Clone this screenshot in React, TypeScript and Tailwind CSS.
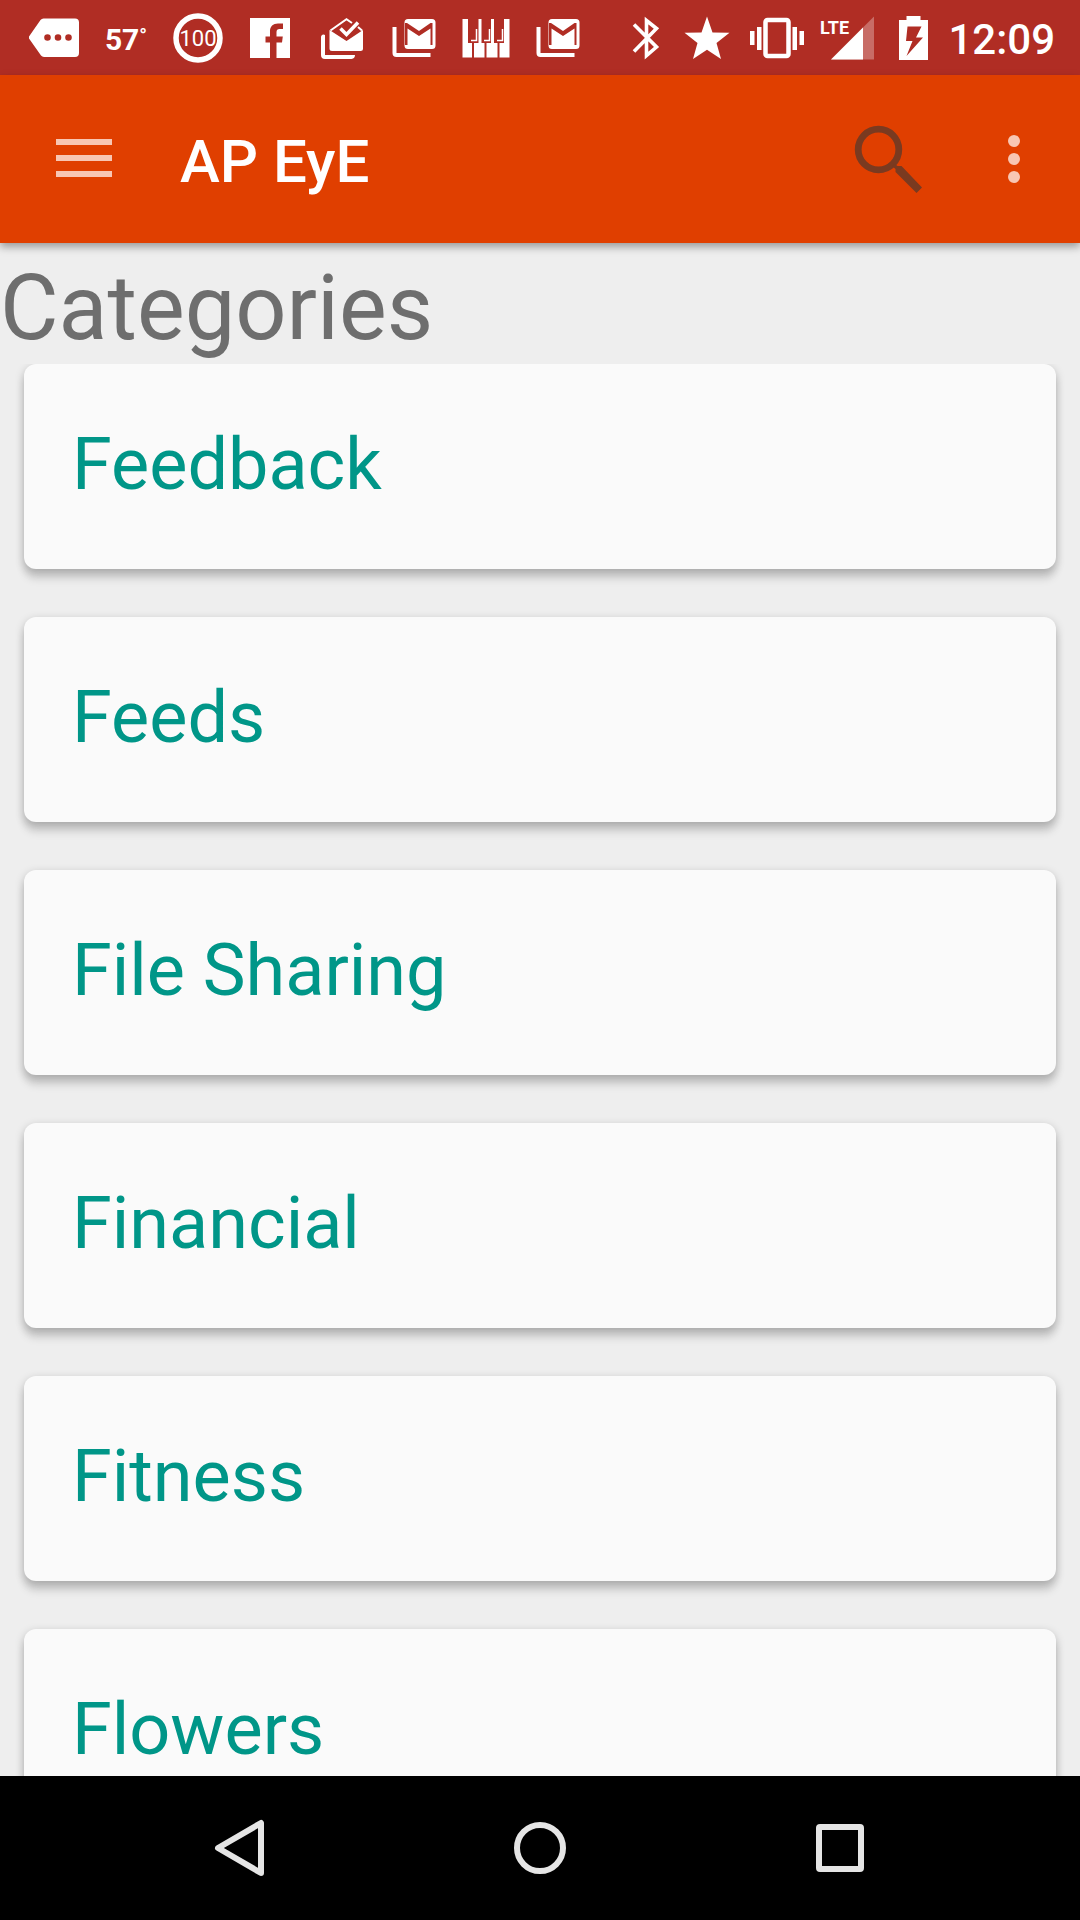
import React from 'react';

const categories = ['Feedback', 'Feeds', 'File Sharing', 'Financial', 'Fitness', 'Flowers'];

const MessageIcon = () => (
  <svg className="w-[50px] h-[44px]" viewBox="0 0 50 44" fill="currentColor">
    <path fillRule="evenodd" d="M14.5 2.5H46a4 4 0 0 1 4 4V37a4 4 0 0 1-4 4H15a4 4 0 0 1-3-1.500L0 22.500a2 2 0 0 1 0-2L11.500 4a4 4 0 0 1 3-1.500zM18.500 18.200a3.300 3.300 0 1 0 0 6.600a3.300 3.300 0 0 0 0-6.600zm10.500 0a3.300 3.300 0 1 0 0 6.600a3.300 3.300 0 0 0 0-6.600zm10.500 0a3.300 3.300 0 1 0 0 6.600a3.300 3.300 0 0 0 0-6.600z" />
  </svg>
);

const BatteryLevelIcon = () => (
  <svg className="w-[50px] h-[50px]" viewBox="0 0 50 50" fill="currentColor">
    <circle cx="25" cy="25" r="22" fill="none" stroke="currentColor" strokeWidth="5.500" />
    <text x="25" y="33" textAnchor="middle" fontSize="22" className="font-['Roboto',sans-serif]">100</text>
  </svg>
);

const FacebookIcon = () => (
  <svg className="w-[42px] h-[42px]" viewBox="0 0 42 42" fill="currentColor">
    <path d="M1 1H41V41H27.500V25.500H33L33.800 19.500H27.500V15C27.500 13 28.500 12 30.500 12H34V6.500H29C24 6.500 21 9.500 21 14V19.500H16.500V25.500H21V41H1z" />
  </svg>
);

const InboxIcon = () => (
  <svg className="w-[44px] h-[44px]" viewBox="0 0 44 44" fill="currentColor">
    <path d="M1 21a2.500 2.500 0 0 1 4-2V39H35a4 4 0 0 1-3.500 4H5a4 4 0 0 1-4-4z" />
    <path d="M9.500 14L26.500 25L43 14V32.500a2.500 2.500 0 0 1-2.500 2.500H12a2.500 2.500 0 0 1-2.500-2.500z" />
    <path d="M10.500 14.500L26.500 3.200L32 7M38 11L42 14.500" fill="none" stroke="currentColor" strokeWidth="2" />
    <path d="M20.500 12.500L26.500 18.500L38 6.500" fill="none" stroke="currentColor" strokeWidth="3.500" />
  </svg>
);

const GmailIcon = () => (
  <svg className="w-[44px] h-[40px]" viewBox="0 0 44 40" fill="currentColor">
    <path d="M.5 9H4.500V35H38.500V39H4.500a4 4 0 0 1-4-4z" />
    <path fillRule="evenodd" d="M16 1H40a3.500 3.500 0 0 1 3.500 3.500V27.500a3.500 3.500 0 0 1-3.500 3.500H16a3.500 3.500 0 0 1-3.500-3.500V4.500A3.500 3.500 0 0 1 16 1zM13 5V27H15.500V10.500L27 18L38.500 10.500V27H40.500V5H38.500L27 13L15 5z" />
  </svg>
);

const PianoIcon = () => (
  <svg className="w-[48px] h-[40px]" viewBox="0 0 48 40" fill="currentColor">
    <path d="M.5 1H6V25H10V39.500H.5zM12 25H22.500V39.500H12zM24.500 25H35.500V39.500H24.500zM37.500 25H42V1H47.500V39.500H37.500z" />
    <path d="M16.500 1H19.500V25H16.500zM29 1H32V25H29z" />
    <path d="M14.500 11V22.500H9M27.500 11V22.500H22M40.500 11V22.500H35" fill="none" stroke="currentColor" strokeWidth="1.500" />
  </svg>
);

const BluetoothIcon = () => (
  <svg className="w-[36px] h-[44px]" viewBox="0 0 36 44" fill="none" stroke="currentColor" strokeWidth="3.600">
    <path d="M2 8.500L24.500 31L14.500 39.500V4.500L24.500 12.500L2 35.500" />
  </svg>
);

const StarIcon = () => (
  <svg className="w-[50px] h-[44px]" viewBox="0 0 50 44" fill="currentColor">
    <path d="M23 .5L28.500 16.500L45.500 16.800L32.500 27L37 43L23 33.800L9 43L13.500 27L.5 16.800L17.500 16.500z" />
  </svg>
);

const VibrateIcon = () => (
  <svg className="w-[54px] h-[42px]" viewBox="0 0 54 42" fill="currentColor">
    <path d="M0 14H4.500V28H0zM7 10H11.500V33H7zM42.500 10H47V33H42.500zM49.500 14H54V28H49.500z" />
    <rect x="15.500" y="3" width="23" height="36" rx="2" fill="none" stroke="currentColor" strokeWidth="4.500" />
  </svg>
);

const SignalIcon = () => (
  <svg className="w-[62px] h-[44px]" viewBox="0 0 62 44" fill="currentColor">
    <path d="M11 43.500L54 .5V43.500z" opacity=".3" />
    <path d="M11 43.500L43 11.500V43.500z" />
    <text x="0" y="18" fontSize="18" className="font-['Roboto',sans-serif] font-bold">LTE</text>
  </svg>
);

const ChargingIcon = () => (
  <svg className="w-[34px] h-[44px]" viewBox="0 0 34 44" fill="currentColor">
    <path fillRule="evenodd" d="M8.500 0H22.500V4H30V44H1V4H8.500zM9.500 10.500L8 25H14.500L8.500 40L25 21.500H18L23.500 10.500z" />
  </svg>
);

const notificationIcons: React.FC[] = [FacebookIcon, InboxIcon, GmailIcon, PianoIcon, GmailIcon];

const StatusBar = () => (
  <div className="flex items-center justify-between h-[75px] shrink-0 pl-[18px] pr-[25px] bg-[#b02d24] text-white">
    <div className="flex items-center">
      <div className="w-[72px] flex justify-center"><MessageIcon /></div>
      <div className="w-[72px] flex justify-center pt-1 text-[30px] leading-9 font-bold">57<span className="text-xl leading-7">°</span></div>
      <div className="w-[72px] flex justify-center"><BatteryLevelIcon /></div>
      {notificationIcons.map((Icon, i) => (
        <div key={i} className="w-[72px] flex justify-center"><Icon /></div>
      ))}
    </div>
    <div className="flex items-center gap-4">
      <BluetoothIcon />
      <StarIcon />
      <VibrateIcon />
      <SignalIcon />
      <ChargingIcon />
      <span className="pt-1 text-[42px] leading-[49px] font-medium">12:09</span>
    </div>
  </div>
);

const AppBar = () => (
  <header className="relative z-10 flex items-center h-[168px] shrink-0 pl-14 pr-[48px] bg-[#e03f00] shadow-[0_4px_8px_rgba(0,0,0,0.35)]">
    <button aria-label="Open menu" className="text-[#f8c6b3]">
      <svg className="w-14 h-[48px]" viewBox="0 0 56 48" fill="currentColor">
        <path d="M0 4H56V10H0zM0 20H56V26H0zM0 36H56V42H0z" />
      </svg>
    </button>
    <h1 className="flex-1 pl-[68px] pt-[5px] text-[60px] leading-[70px] font-medium text-white">AP EyE</h1>
    <button aria-label="Search" className="text-[#7a3a20]">
      <svg className="w-[72px] h-[72px]" viewBox="0 0 72 72" fill="currentColor">
        <circle cx="25.500" cy="26.500" r="20.300" fill="none" stroke="currentColor" strokeWidth="6.800" />
        <path d="M39 43L42 41L44.500 43H48.500L69 64.500L63.500 70L42.500 49V46z" />
      </svg>
    </button>
    <button aria-label="More options" className="ml-[71px] text-[#f8c6b3]">
      <svg className="w-[36px] h-[48px]" viewBox="0 0 36 48" fill="currentColor">
        <circle cx="18" cy="6" r="6" />
        <circle cx="18" cy="24" r="6" />
        <circle cx="18" cy="42" r="6" />
      </svg>
    </button>
  </header>
);

const NavigationBar = () => (
  <nav className="flex h-[144px] shrink-0 px-[90px] bg-black text-[#e5e5e5]">
    <button aria-label="Back" className="flex-1 flex items-center justify-center">
      <svg className="w-[60px] h-[60px]" viewBox="0 0 60 60" fill="none" stroke="currentColor" strokeWidth="6" strokeLinejoin="round">
        <path d="M51 5V55L8 30z" />
      </svg>
    </button>
    <button aria-label="Home" className="flex-1 flex items-center justify-center">
      <svg className="w-[60px] h-[60px]" viewBox="0 0 60 60" fill="none" stroke="currentColor" strokeWidth="6">
        <circle cx="30" cy="30" r="23" />
      </svg>
    </button>
    <button aria-label="Recent apps" className="flex-1 flex items-center justify-center">
      <svg className="w-[60px] h-[60px]" viewBox="0 0 60 60" fill="none" stroke="currentColor" strokeWidth="6">
        <rect x="9" y="9" width="42" height="42" rx="1" />
      </svg>
    </button>
  </nav>
);

const App: React.FC = () => {
  return (
    <div className="flex flex-col h-screen bg-[#eeeeee] font-['Roboto',sans-serif]">
      <StatusBar />
      <AppBar />
      <main className="flex-1 min-h-0 flex flex-col">
        <h2 className="pt-[13px] pb-[3px] text-[90px] leading-[105px] text-[#6e6e6e]">Categories</h2>
        <ul className="flex-1 min-h-0 flex flex-col gap-12 px-6 overflow-y-auto [scrollbar-width:none]">
          {categories.map((name) => (
            <li key={name}>
              <a
                href="#"
                className="block rounded-xl bg-[#fafafa] px-12 pt-[59px] pb-[62px] text-[72px] leading-[84px] text-[#009688] shadow-[0_10px_8px_rgba(0,0,0,0.12),0_3px_10px_rgba(0,0,0,0.22)]"
              >
                {name}
              </a>
            </li>
          ))}
        </ul>
      </main>
      <NavigationBar />
    </div>
  );
};

export default App;
